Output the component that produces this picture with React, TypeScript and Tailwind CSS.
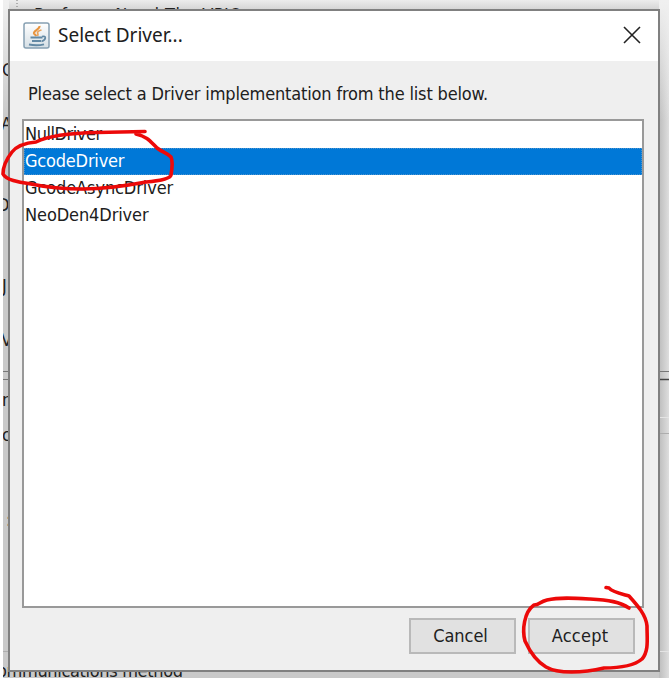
import React from "react";

const drivers = [
  { name: "NullDriver", cls: "tracking-[-0.45px]" },
  { name: "GcodeDriver", cls: "tracking-[-0.2px]" },
  { name: "GcodeAsyncDriver", cls: "tracking-[-0.1px]" },
  { name: "NeoDen4Driver", cls: "tracking-[-0.1px]" },
];

function JavaIcon() {
  return (
    <svg className="mb-[2px] h-[27px] w-[27px] shrink-0" viewBox="0 0 27 27" fill="none">
      <defs>
        <linearGradient id="frame" x1="0" y1="0" x2="0" y2="1">
          <stop offset="0" stopColor="#ffffff" />
          <stop offset="1" stopColor="#d5dfe5" />
        </linearGradient>
      </defs>
      <rect x="1" y="1" width="25" height="25" rx="2" fill="url(#frame)" stroke="#86a0b2" strokeWidth="1.5" />
      <path d="M16.500 4c.5 3.500-6 4.500-5.500 7.200.3 1.200 1.500 1.600 2.300 2.800" stroke="#e8943e" strokeWidth="2.200" />
      <path d="M18.500 8c-3 .8-4.500 2-3.800 3.400.5 1 .6 1.600-.2 2.600" stroke="#e8a35c" strokeWidth="1.700" />
      <path d="M7.500 15.500h12M9 19h9M6 22.600c4 .8 11 .8 15-.2" stroke="#6389a4" strokeWidth="2" />
      <path d="M19 14.500c4.500-1 4.500 3-.5 5" stroke="#6389a4" strokeWidth="1.700" />
    </svg>
  );
}

function Background() {
  return (
    <svg className="absolute inset-0 h-full w-full" viewBox="0 0 669 678">
      <defs>
        <linearGradient id="right" x1="0" y1="0" x2="1" y2="0">
          <stop offset="0" stopColor="#bdbdbd" />
          <stop offset="1" stopColor="#dedede" />
        </linearGradient>
        <linearGradient id="top" x1="0" y1="0" x2="0" y2="1">
          <stop offset="0" stopColor="#ededed" />
          <stop offset="1" stopColor="#d4d4d4" />
        </linearGradient>
        <linearGradient id="fade" x1="0" y1="0" x2="0" y2="1">
          <stop offset="0" stopColor="#f0f0f0" stopOpacity="1" />
          <stop offset="1" stopColor="#f0f0f0" stopOpacity="0" />
        </linearGradient>
      </defs>
      <rect width="669" height="678" fill="#c9c9c9" />
      <rect x="659" width="10" height="678" fill="url(#right)" />
      <rect width="669" height="10" fill="url(#top)" />
      <rect x="659" y="0" width="10" height="120" fill="url(#fade)" />
      <rect x="3" y="0" width="6" height="120" fill="url(#fade)" />
      <path d="M17 0V10" stroke="#777" strokeDasharray="1 2" />
      <g fill="#222" fontFamily="DejaVu Sans Condensed, sans-serif" fontSize="18">
        <text x="34" y="21" textLength="208">Performs Need The VPIO</text>
        <text x="2" y="76">C</text>
        <text x="1" y="130">A</text>
        <text x="-3" y="211">D</text>
        <text x="2" y="292">J</text>
        <text x="1" y="346">V</text>
        <text x="2" y="406">r</text>
        <text x="2" y="441">c</text>
        <text x="6" y="526">:</text>
        <text x="-3" y="677" textLength="186">ommunications method</text>
      </g>
      <path d="M3 371.500H9M3 379.500H9M659 371.500H669" stroke="#777" />
      <path d="M659 379.500H669" stroke="#444" strokeWidth="1.500" />
      <path d="M659 417.500H669M659 651.500H669" stroke="#e4e4e4" />
      <path d="M659 433.500H669M3 651.500H9" stroke="#adadad" />
      <rect width="3" height="678" fill="#fff" />
    </svg>
  );
}

function Annotations() {
  return (
    <svg
      className="pointer-events-none absolute inset-0 h-full w-full"
      viewBox="0 0 669 678"
      fill="none"
      stroke="#ec0909"
      strokeWidth="3.600"
      strokeLinecap="round"
      strokeLinejoin="round"
    >
      <path d="M145 131.500L97 132.500C70 133 48 136 36 142C24 143 16 147 12 152C5 161 3 167 3 174C6 180 18 182 31 184C45 187 61 189 83 189C107 189 125 186 146 182C158 181 170 179 171 175C172 169 173 161 171 157C167 153 162 152 157 148C150 141 148 137 136 134" />
      <path d="M629 608C620 602 609 600 590 599C574 598 559 597 547 600C539 602 540 605 534 605C524 612 522 630 525 641C530 652 536 661 546 667C558 674 583 673 604 668C621 668 635 665 642 659C649 651 647 639 647 626C646 615 638 606 629 596C622 594 612 592 609 588L606 587.500" />
    </svg>
  );
}

export default function App() {
  return (
    <div className="relative h-[678px] w-[669px] overflow-hidden font-['DejaVu_Sans_Condensed','DejaVu_Sans',sans-serif] text-[18px] text-[#202020]">
      <Background />
      <div className="absolute top-[9px] left-[8px] flex h-[663px] w-[652px] flex-col border-2 border-[#808080] bg-[#efefef]">
        <header className="flex h-[50px] shrink-0 items-center bg-white pl-[13px]">
          <JavaIcon />
          <h1 className="mb-[2px] ml-[8px] font-['Noto_Sans',sans-serif] text-[19px] whitespace-nowrap">Select Driver...</h1>
          <svg className="mr-[17px] mb-[3px] ml-auto h-[18px] w-[18px]" viewBox="0 0 18 18" stroke="#222" strokeWidth="1.600">
            <path d="M1 1L17 17M17 1L1 17" />
          </svg>
        </header>
        <p className="flex h-[58px] shrink-0 items-center pt-[7px] pl-[18px] tracking-[-0.160px] whitespace-nowrap">
          Please select a Driver implementation from the list below.
        </p>
        <ul className="mx-[12px] flex h-[489px] w-[622px] shrink-0 flex-col border-2 border-[#999] bg-white">
          {drivers.map((d) => (
            <li
              key={d.name}
              className={`flex h-[27px] shrink-0 items-center whitespace-nowrap ${d.cls} ${
                d.name === "GcodeDriver"
                  ? "border border-dotted border-[#4a93cf] bg-[#0078d7] pb-[2px] text-white"
                  : "px-px pb-[2px]"
              }`}
            >
              {d.name}
            </li>
          ))}
        </ul>
        <footer className="mt-[10px] mr-[23px] flex justify-end gap-[12px]">
          <button className="h-[36px] w-[107px] border-2 border-[#b9b9b9] bg-[#e1e1e1] pr-[4px] pb-[2px] tracking-[-0.050px]">Cancel</button>
          <button className="h-[36px] w-[107px] border-2 border-[#b9b9b9] bg-[#e1e1e1] pr-[3px] pb-[2px] tracking-[0.200px]">Accept</button>
        </footer>
      </div>
      <Annotations />
    </div>
  );
}
